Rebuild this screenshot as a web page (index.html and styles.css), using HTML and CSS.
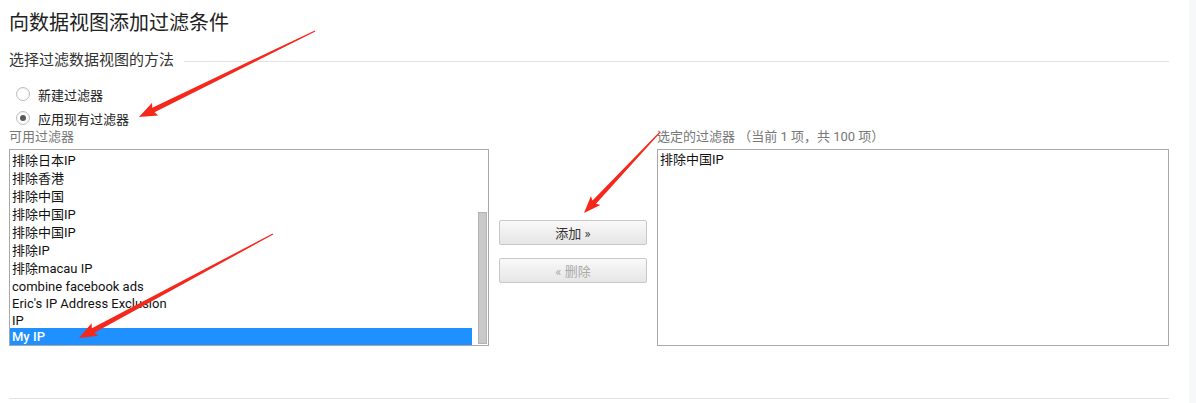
FILE: index.html
```html
<!DOCTYPE html>
<html lang="zh-CN">
<head>
<meta charset="utf-8">
<title>向数据视图添加过滤条件</title>
<link rel="stylesheet" href="styles.css">
</head>
<body>
<div class="page">
  <main class="main">
    <h1 class="title">向数据视图添加过滤条件</h1>
    <div class="legend">
      <span class="legend-text">选择过滤数据视图的方法</span>
      <span class="legend-line"></span>
    </div>
    <div class="radios">
      <label class="radio-row"><span class="radio"></span><span class="radio-label">新建过滤器</span></label>
      <label class="radio-row"><span class="radio checked"></span><span class="radio-label">应用现有过滤器</span></label>
    </div>
    <div class="columns">
      <div class="col-left">
        <div class="col-label">可用过滤器</div>
        <div class="listbox">
          <div class="options">
            <div class="opt cjk">排除日本IP</div>
            <div class="opt cjk">排除香港</div>
            <div class="opt cjk">排除中国</div>
            <div class="opt cjk">排除中国IP</div>
            <div class="opt cjk">排除中国IP</div>
            <div class="opt cjk">排除IP</div>
            <div class="opt cjk">排除macau IP</div>
            <div class="opt">combine facebook ads</div>
            <div class="opt">Eric's IP Address Exclusion</div>
            <div class="opt">IP</div>
            <div class="opt selected">My IP</div>
          </div>
          <div class="scrollbar"><div class="thumb"></div></div>
        </div>
      </div>
      <div class="col-mid">
        <button class="btn" type="button">添加 »</button>
        <button class="btn disabled" type="button" disabled>« 删除</button>
      </div>
      <div class="col-right">
        <div class="col-label">选定的过滤器 （当前 1 项，共 100 项）</div>
        <div class="listbox right">
          <div class="options top">
            <div class="opt cjk">排除中国IP</div>
          </div>
        </div>
      </div>
    </div>
    <div class="bottom-line"></div>
  </main>
  <div class="strip"></div>
</div>
<svg class="annot" width="1196" height="403" viewBox="0 0 1196 403" aria-hidden="true">
  <g fill="#f5281c">
    <g transform="translate(139 117) rotate(-26.04)">
      <polygon points="0,0 18,-7 16,-2.6 196,-0.6 196,0.6 16,2.6 18,7"/>
    </g>
    <g transform="translate(79 338) rotate(-28.2)">
      <polygon points="0,0 18,-7 16,-2.6 220,-0.6 220,0.6 16,2.6 18,7"/>
    </g>
    <g transform="translate(584 213) rotate(-46.8)">
      <polygon points="0,0 17,-6.5 15,-2.4 111,-0.6 111,0.6 15,2.4 17,6.5"/>
    </g>
  </g>
</svg>
</body>
</html>
```

FILE: styles.css
```css
html, body {
  margin: 0;
  padding: 0;
  background: #ffffff;
}
body {
  font-family: Roboto, "Noto Sans CJK SC", sans-serif;
  color: #222;
  position: relative;
  width: 1196px;
  height: 403px;
  overflow: hidden;
}
.page {
  display: flex;
  height: 403px;
}
.main {
  width: 1160px;
  padding: 9px 20px 0 9px;
  display: flex;
  flex-direction: column;
}
.strip {
  flex: 1;
  background: #f7f8fa;
}
.title {
  margin: 0;
  font-size: 20px;
  line-height: 28px;
  font-weight: normal;
  color: #222;
}
.legend {
  display: flex;
  align-items: center;
  height: 22px;
  margin-top: 12px;
}
.legend-text {
  font-size: 15px;
  color: #333;
  line-height: 22px;
}
.legend-line {
  flex: 1;
  height: 1px;
  background: #e2e2e2;
  margin-left: 10px;
  margin-top: 2px;
}
.radios {
  display: flex;
  flex-direction: column;
  margin-top: 11px;
}
.radio-row {
  display: flex;
  align-items: center;
  height: 24px;
  padding-left: 7px;
}
.radio {
  width: 12px;
  height: 12px;
  border: 1px solid #bdbdbd;
  border-radius: 50%;
  background: #fff;
  display: flex;
  align-items: center;
  justify-content: center;
  box-shadow: inset 0 1px 1px rgba(0,0,0,0.06);
}
.radio.checked::after {
  content: "";
  width: 6px;
  height: 6px;
  border-radius: 50%;
  background: #5a5a5a;
}
.radio-label {
  margin-left: 8px;
  font-size: 13px;
  color: #222;
}
.columns {
  display: flex;
  align-items: flex-start;
  gap: 10px;
  margin-top: -2px;
}
.col-label {
  font-size: 13px;
  line-height: 18px;
  padding-bottom: 3px;
  color: #777;
  white-space: nowrap;
}
.col-left {
  width: 480px;
}
.col-right {
  flex: 1;
}
.listbox {
  height: 195px;
  border: 1px solid #a9a9a9;
  display: flex;
  overflow: hidden;
}
.options {
  width: 462px;
  display: flex;
  flex-direction: column;
  justify-content: flex-end;
}
.options.top {
  justify-content: flex-start;
  width: auto;
}
.opt {
  box-sizing: border-box;
  font-size: 13px;
  height: 17px;
  line-height: 17px;
  padding-left: 2px;
  padding-top: 1px;
  color: #111;
  white-space: nowrap;
}
.opt.cjk {
  height: 18px;
  line-height: 18px;
}
.opt.selected {
  background: #1e90ff;
  color: #fff;
  font-weight: 500;
  line-height: 16px;
}
.scrollbar {
  width: 9px;
  margin-left: 6px;
  display: flex;
  flex-direction: column;
  justify-content: flex-end;
  padding-bottom: 1px;
}
.thumb {
  height: 130px;
  background: #c9c9c9;
  border: 1px solid #b3b3b3;
}
.col-mid {
  width: 148px;
  margin-top: 92px;
  display: flex;
  flex-direction: column;
  gap: 13px;
}
.btn {
  width: 148px;
  height: 25px;
  border: 1px solid #c8c8c8;
  border-radius: 2px;
  background: linear-gradient(#f9f9f9, #e6e6e6);
  font-family: Roboto, "Noto Sans CJK SC", sans-serif;
  font-size: 13px;
  color: #333;
  padding: 0;
}
.btn.disabled {
  color: #aaa;
}
.bottom-line {
  height: 1px;
  background: #e2e2e2;
  margin-top: 52px;
}
.annot {
  position: absolute;
  left: 0;
  top: 0;
  pointer-events: none;
}
```
